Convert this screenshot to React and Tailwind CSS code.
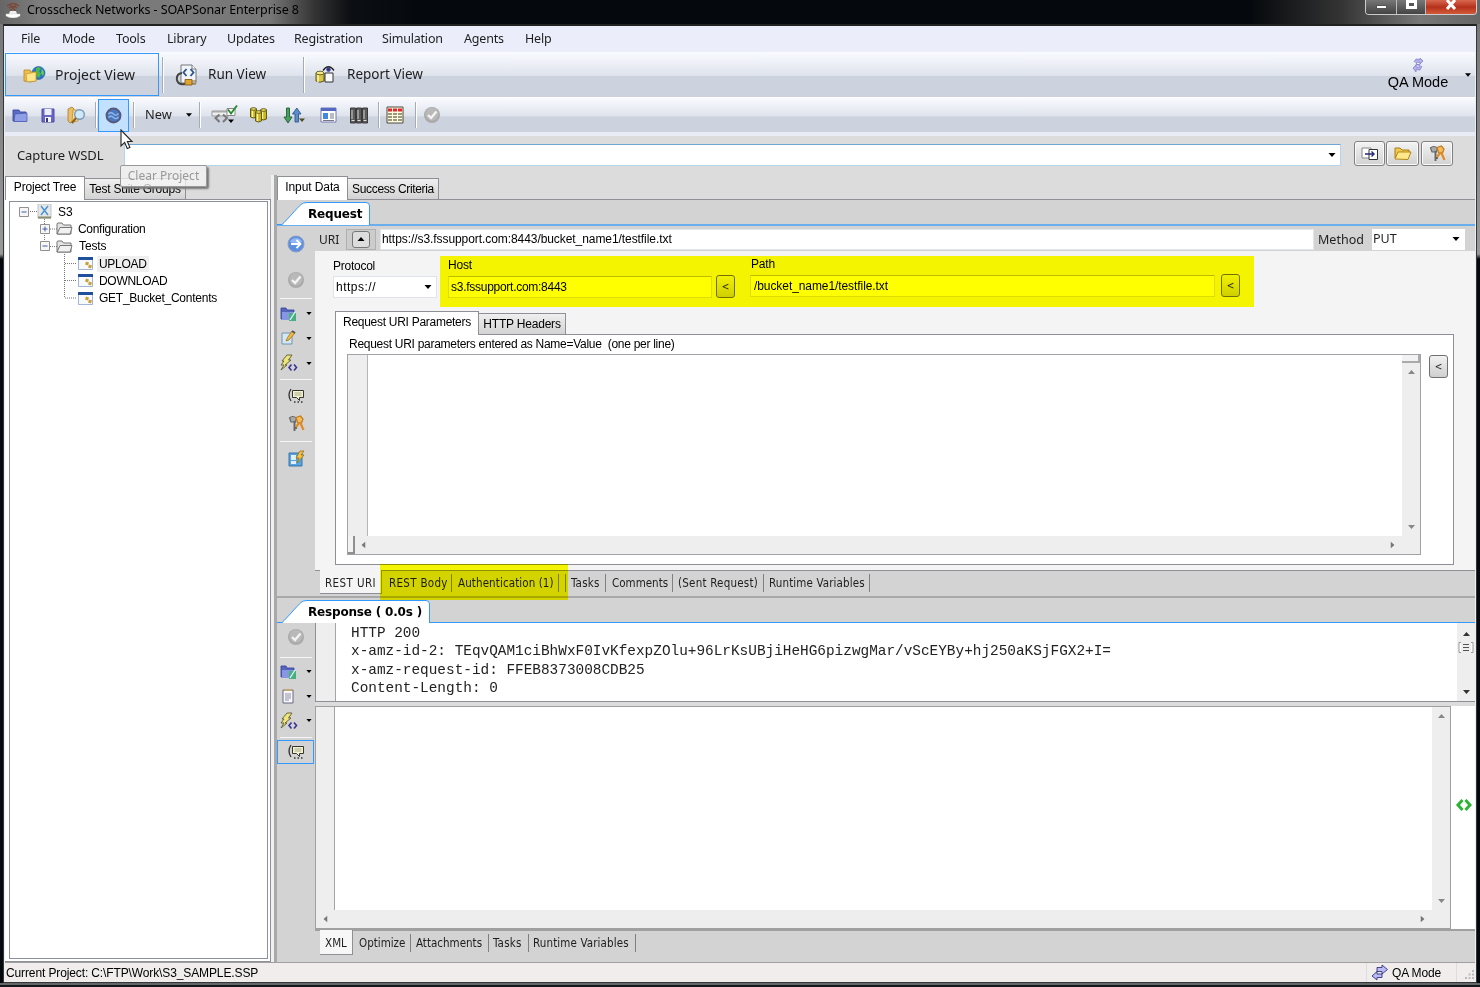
import React, { useState } from 'react';
import { clsx } from 'clsx';

const sans = "font-['Liberation_Sans',sans-serif] whitespace-pre text-black";
const noto = "font-['Noto_Sans',sans-serif] whitespace-pre text-[#1e1e1e]";
const verdana = "font-['DejaVu_Sans',sans-serif] whitespace-pre text-black";
const tahoma = "font-['DejaVu_Sans_Condensed','DejaVu_Sans',sans-serif] whitespace-pre text-[#1e1e1e]";

const menu = [
  ['File', 'w-[41px]'],
  ['Mode', 'w-[54px]'],
  ['Tools', 'w-[51px]'],
  ['Library', 'w-[60px]'],
  ['Updates', 'w-[67px]'],
  ['Registration', 'w-[88px]'],
  ['Simulation', 'w-[82px]'],
  ['Agents', 'w-[61px]'],
  ['Help', 'w-[40px]'],
];

const tests = [
  ['UPLOAD', 'tracking-[-0.3px]'],
  ['DOWNLOAD', 'tracking-[-0.3px]'],
  ['GET_Bucket_Contents', 'tracking-[-0.25px]'],
];

const responseLines = [
  'HTTP 200',
  'x-amz-id-2: TEqvQAM1ciBhWxF0IvKfexpZOlu+96LrKsUBjiHeHG6pizwgMar/vScEYBy+hj250aKSjFGX2+I=',
  'x-amz-request-id: FFEB8373008CDB25',
  'Content-Length: 0',
];

/* ---------- icons ---------- */

const Svg = ({ w = 18, h = 18, className, children }) => (
  <svg width={w} height={h} viewBox={`0 0 ${w} ${h}`} className={clsx('shrink-0', className)}>{children}</svg>
);

const Caret = ({ className, fill = '#000' }) => (
  <svg width="7" height="4" viewBox="0 0 7 4" className={clsx('shrink-0', className)}><path d="M0 0h7L3.5 4z" fill={fill} /></svg>
);

const AppIcon = () => (
  <Svg w={16} h={16}>
    <path d="M2 4q6-5 12 0M4 6q4-3 8 0M5 3l6 6M11 3L5 9" stroke="#7c4738" strokeWidth="1.3" fill="none" />
    <path d="M5 9h6l1 3H4z" fill="#eee" />
    <path d="M1 12h14v2q-7 4-14 0z" fill="#fff" stroke="#ccc" strokeWidth=".5" />
  </Svg>
);

const GlobeFolder = () => (
  <Svg w={24} h={20}>
    <circle cx="15.500" cy="8" r="6.500" fill="#2676c4" stroke="#1d5a9c" strokeWidth=".6" />
    <path d="M13 3q4-2 5 1l-2 2 2 3-2 4-3-3z" fill="#4fb848" />
    <path d="M19 4q3 3 1 7l-2-3z" fill="#6ccf53" />
    <path d="M1 5h6l1 2h5v9q-6 2-12 0z" fill="#eebf4f" stroke="#b48721" strokeWidth=".8" />
    <path d="M3 9l10-2v9l-9 1z" fill="#fde58c" stroke="#c4952b" strokeWidth=".7" />
  </Svg>
);

const RunIcon = () => (
  <Svg w={24} h={24}>
    <path d="M6 2h11l4 4v14H6z" fill="#f1f4f8" stroke="#777" />
    <path d="M17 2v4h4" fill="#fff" stroke="#777" />
    <path d="M11.500 6L8.500 9.500l3 3.500M15.500 6l3 3.500-3 3.500" stroke="#27548e" strokeWidth="1.800" fill="none" />
    <path d="M7 10q-6 1-5 7 1 5 8 4" stroke="#444" strokeWidth="2" fill="none" />
    <path d="M10 16.500h7v5.500h-7z" fill="#e0a531" stroke="#7a5411" strokeWidth=".8" />
    <path d="M17 18h4M17 21h4" stroke="#8a641c" strokeWidth="1.200" />
  </Svg>
);

const ReportIcon = () => (
  <Svg w={22} h={22}>
    <path d="M2 9v8q4 2.500 8 0V9z" fill="#d6c64a" stroke="#4d4a10" strokeWidth=".9" />
    <path d="M4 9v9" stroke="#fbf3a4" strokeWidth="1.600" />
    <ellipse cx="6" cy="9" rx="4" ry="1.800" fill="#f3e989" stroke="#4d4a10" strokeWidth=".8" />
    <path d="M11 9h8v9h-8z" fill="#fafafa" stroke="#333" />
    <path d="M9 6.500q5.500-7.500 11 0" stroke="#222" strokeWidth="1.300" fill="none" />
    <circle cx="14.500" cy="5.500" r="2.200" fill="#37398a" />
  </Svg>
);

const BlueFolder = () => (
  <Svg w={17} h={15}>
    <path d="M1 2h6l1 2h6v9H1z" fill="#5a6cc4" stroke="#3b4a9c" strokeWidth=".9" />
    <path d="M3 6l12-1v8.500H2z" fill="#8e9ee6" stroke="#4556aa" strokeWidth=".7" />
  </Svg>
);

const SaveIcon = () => (
  <Svg w={14} h={15}>
    <path d="M1 1h12v13H1z" fill="#6868c4" stroke="#4d4da8" />
    <path d="M3.500 1h7v6h-7z" fill="#eceef8" />
    <path d="M4 9h6v5H4z" fill="#f4f4fb" />
    <path d="M5 10h2v4H5z" fill="#39397c" />
  </Svg>
);

const SearchFolder = () => (
  <Svg w={19} h={18}>
    <path d="M1 3l4-2 2 2v12l-4 2-2-2z" fill="#e9bf6a" stroke="#a87a22" strokeWidth=".8" />
    <path d="M6 4h5v11l-6 1z" fill="#f6dd98" stroke="#b68a34" strokeWidth=".7" />
    <circle cx="12.500" cy="8.500" r="4.800" fill="#cfe8fa" stroke="#7f99b3" strokeWidth="1.400" />
    <path d="M9 12l-4 5" stroke="#8b6224" strokeWidth="2.200" />
  </Svg>
);

const ClearIcon = () => (
  <Svg w={17} h={17}>
    <circle cx="8.500" cy="8.500" r="7" fill="#4a78c0" stroke="#58597a" strokeWidth="1.900" />
    <path d="M3.500 7q2.500-2.500 5 0t5-.5M3.500 10.500q2.500-2.500 5 0t5-.5" stroke="#8fbae8" strokeWidth="1.300" fill="none" />
  </Svg>
);

const XmlCheck = () => (
  <Svg w={28} h={20}>
    <path d="M1 6h17v5H1z" fill="#eee" stroke="#999" />
    <path d="M1 6h15v1.500H1z" fill="#aaa" />
    <path d="M8.500 9.500l-4 3.500 4 4M12 9.500l4 3.500-4 4" stroke="#777" strokeWidth="2" fill="none" />
    <path d="M16 3.500h8v7h-8z" fill="#fff" stroke="#888" />
    <path d="M17 4.500l3 4 6-8" stroke="#25892d" strokeWidth="1.800" fill="none" />
    <path d="M17 14.500h6l-3 3.500z" fill="#000" />
  </Svg>
);

const Barrels = () => (
  <Svg w={18} h={16}>
    {[[0.5, 1, 8], [10.5, 2, 9], [5.5, 4, 9]].map(([x, y, h], i) => (
      <g key={i} stroke="#55500c" strokeWidth=".9">
        <path d={`M${x} ${y + 1}v${h}q3 2 6 0v-${h}z`} fill="#c9b629" />
        <path d={`M${x + 2} ${y + 2}v${h - 1}`} stroke="#fbf39b" strokeWidth="1.400" />
        <ellipse cx={x + 3} cy={y + 1} rx="3" ry="1.300" fill="#efe36a" />
      </g>
    ))}
  </Svg>
);

const UpDown = () => (
  <Svg w={22} h={17}>
    <path d="M3.500 1h3v9h2.500l-4 6-4-6h2.500z" fill="#46a05b" stroke="#20603a" strokeWidth=".9" />
    <path d="M12 15h3.500V7H18l-4.200-6L9.500 7H12z" fill="#5c8dc9" stroke="#2f588f" strokeWidth=".9" />
    <path d="M16 11.500h6l-3 3.500z" fill="#4f4a1c" />
  </Svg>
);

const FormIcon = () => (
  <Svg w={17} h={16}>
    <path d="M1 1h15v14H1z" fill="#fff" stroke="#7779b5" />
    <path d="M1 1h15v3H1z" fill="#5568c4" />
    <path d="M3 6h5v6H3z" fill="#3f8ae0" />
    <path d="M10 7h4M10 9h4M10 11h4M3 13.500h11" stroke="#778" />
  </Svg>
);

const Servers = () => (
  <Svg w={18} h={17}>
    {[0.5, 6.5, 12.5].map((x) => (
      <g key={x}>
        <path d={`M${x} 1h5v15h-5z`} fill="#5c5c5c" stroke="#3a3a3a" />
        <path d={`M${x + 1.5} 3v9`} stroke="#b9b9b9" strokeWidth="1.300" />
        <path d={`M${x + 1} 13.500h3`} stroke="#ddd" />
      </g>
    ))}
  </Svg>
);

const TableIcon = () => (
  <Svg w={18} h={18}>
    <path d="M1 1h16v16H1z" fill="#fffbe6" stroke="#4d4a3c" />
    <path d="M2 4h14" stroke="#e32626" strokeWidth="3" strokeDasharray="4 1" />
    <path d="M2 8h14M2 11h14M2 14h14" stroke="#7b7850" strokeWidth="1.500" strokeDasharray="4 1" />
  </Svg>
);

const CheckCircle = () => (
  <Svg>
    <circle cx="9" cy="9" r="8" fill="#aaa" />
    <circle cx="9" cy="8" r="6.500" fill="#b9b9b9" />
    <path d="M5 9l3 3 5.500-6.500" stroke="#f3f3f3" strokeWidth="2.400" fill="none" />
  </Svg>
);

const GoArrow = () => (
  <Svg>
    <circle cx="9" cy="9" r="8" fill="#5d8fe0" stroke="#8b9cc0" />
    <path d="M3 7a6.500 6.500 0 0 1 12 0q-6 2-12 0z" fill="#91b6f2" />
    <path d="M4 9h9M9.500 5l4 4-4 4" stroke="#fff" strokeWidth="1.800" fill="none" />
  </Svg>
);

const FolderEdit = () => (
  <Svg w={17} h={16}>
    <path d="M1 2h5l1 2h7v9H1z" fill="#5465bd" stroke="#3b4a9c" strokeWidth=".9" />
    <path d="M2 6h12l-1 8H2z" fill="#8796e0" />
    <path d="M9 7h7v8H9z" fill="#49ae83" />
    <path d="M10 14l5-8" stroke="#d8f4e7" strokeWidth="1.400" />
  </Svg>
);

const NoteEdit = () => (
  <Svg w={16} h={16}>
    <path d="M2 3h10v11H2z" fill="#d3e8f4" stroke="#7295ad" />
    <path d="M6 11l1.500-3.500L12 1l3 2-6 7z" fill="#efb843" stroke="#9a6d18" strokeWidth=".7" />
    <path d="M12 1l3 2" stroke="#555" strokeWidth="2" />
  </Svg>
);

const BoltCode = () => (
  <Svg w={18} h={18}>
    <path d="M7 1h5L8.500 6H11L5 11h2L1 16l3-5H1l3-4H2z" fill="#eee67a" stroke="#5c5b32" strokeWidth=".9" />
    <path d="M11.500 10.500L9 13.500l2.500 3M14 10.500l2.500 3-2.500 3" stroke="#3a3494" strokeWidth="1.600" fill="none" />
  </Svg>
);

const Comment = () => (
  <Svg w={18} h={16}>
    <path d="M4 1q-4 6 0 12" stroke="#333" strokeWidth="1.300" fill="none" />
    <path d="M5.500 2.500h11v7h-4v3l-3-3h-4z" fill="#f3f3cf" stroke="#333" />
    <path d="M7.500 5h7M7.500 7h7" stroke="#a9a98c" />
    <path d="M7 14h9" stroke="#333" strokeWidth="1.300" strokeDasharray="1.500 2" />
  </Svg>
);

const Keys = () => (
  <Svg w={17} h={17}>
    <path d="M1.500 3q3-3 7 0l-1 4H3z" fill="#aaa" stroke="#666" strokeWidth="1.200" />
    <path d="M6.500 6v10M6.500 13H9" stroke="#666" strokeWidth="1.900" />
    <path d="M8 2.500l4.500-1.500 2.500 3-1.500 4-4-.5z" fill="#f4bd59" stroke="#c07a1f" strokeWidth="1.200" />
    <path d="M12 7l3.500 8M11 8l-3 4" stroke="#e08a22" strokeWidth="2.200" />
  </Svg>
);

const BoltBox = () => (
  <Svg w={17} h={17}>
    <path d="M1 3h13v13H1z" fill="#5ba3dc" stroke="#3674ae" />
    <path d="M3 5h5v5H3zM3 11h5v3H3z" fill="#dff0fb" />
    <path d="M12 1h4l-3 4h3l-7 8 2-5H8z" fill="#f6c340" stroke="#97701a" strokeWidth=".8" />
  </Svg>
);

const Doc = () => (
  <Svg w={15} h={16}>
    <path d="M3 2h10v13H3z" fill="#f7f7fb" stroke="#686880" />
    <path d="M4 1h8v2H4z" fill="#c0a777" />
    <path d="M5 6h6M5 8h6M5 10h6M5 12h4" stroke="#8d8da5" />
  </Svg>
);

const SwapDoc = () => (
  <Svg w={18} h={14}>
    <path d="M1 1h9v10H1z" fill="#fff" stroke="#888" />
    <path d="M8 2.500h8.500v10H8z" fill="#fff" stroke="#333" />
    <path d="M4 7h9M10.500 4.500L13 7l-2.500 2.500" stroke="#26267c" strokeWidth="1.400" fill="none" />
  </Svg>
);

const YellowFolder = () => (
  <Svg w={18} h={15}>
    <path d="M1 12V2h5l2 2h7v3" fill="#eec94f" stroke="#ab7d12" />
    <path d="M1 13L4 6h13l-3 7.500z" fill="#ffe88a" stroke="#b3851a" />
  </Svg>
);

const QaIcon = () => (
  <Svg w={12} h={16}>
    <path d="M2 5l2-3 4 .5V1l3 3-3 3V5.500L5 5l-1 3h3" fill="#b3b1ee" stroke="#8582c8" strokeWidth=".8" />
    <path d="M10 9l-2 4-4-.5V15l-3-4 3-3v2l3 .500 1-3H5" fill="#b3b1ee" stroke="#8582c8" strokeWidth=".8" />
  </Svg>
);

const SyncArrows = () => (
  <Svg w={18} h={17}>
    <path d="M6 3.500h5V1l5.500 4.500L11 10V7.500H6z" fill="#b9bbf5" stroke="#34347c" strokeWidth=".9" />
    <path d="M11 10H6V7.500L1 12l5 4v-2.500h5z" fill="#b9bbf5" stroke="#34347c" strokeWidth=".9" />
  </Svg>
);

const GreyFolder = () => (
  <Svg w={17} h={13}>
    <path d="M1 12V2q0-1 1-1h4l1.500 2H15v9z" fill="#e4e4e4" stroke="#777" />
    <path d="M1 12L4 5.500h12L14 12z" fill="#f1f1f1" stroke="#777" />
  </Svg>
);

const TestIcon = () => (
  <Svg w={15} h={13}>
    <path d="M.5.5h14v12H.5z" fill="#f7faff" stroke="#8aa3cd" strokeWidth=".8" />
    <path d="M0 0h15v3H0z" fill="#204f9e" />
    <path d="M8 4.500l3 1-1 3-3-1zM11 7.500l3 1-1 3-3-1z" fill="#c9a13a" />
  </Svg>
);

const Expander = ({ open }) => (
  <Svg w={10} h={10}>
    <path d="M.5.5h9v9h-9z" fill="#f6f6f6" stroke="#909090" />
    <path d={open ? 'M2.500 5h5' : 'M2.500 5h5M5 2.500v5'} stroke="#3c5ca8" />
  </Svg>
);

/* ---------- small controls ---------- */

const ToolSep = ({ className }) => <div className={clsx('w-[2px] border-l border-[#a5aab8] bg-white', className)} />;

const LessButton = ({ className }) => (
  <button className={clsx('flex h-[23px] w-[19px] shrink-0 items-center justify-center rounded-[3px] border border-[#707070] bg-gradient-to-b from-[#f2f2f2] to-[#cfcfcf]', className)}>
    <span className={clsx(tahoma, 'text-[10px] leading-none')}>&lt;</span>
  </button>
);

const IconButton = ({ className, children }) => (
  <button className={clsx('flex h-[25px] items-center justify-center rounded-[3px] border border-[#808080] bg-gradient-to-b from-[#f3f3f3] to-[#d2d2d2] shadow-[inset_0_0_0_1px_#fafafa]', className)}>
    {children}
  </button>
);

const SideRow = ({ className, children, menu: hasMenu }) => (
  <div className={clsx('flex items-center', hasMenu ? 'justify-between pr-[3px] pl-[3px]' : 'justify-center', className)}>
    {children}
    {hasMenu && <Caret className="h-[3px] w-[6px]" />}
  </div>
);

const SideSep = ({ className }) => <div className={clsx('mx-[3px] h-px shrink-0 bg-[#f6f6f6]', className)} />;

const SlantTab = ({ w, children }) => (
  <div className="relative h-full">
    <svg width={w} height="23" viewBox={`0 0 ${w} 23`} className="absolute bottom-[-1px] left-0">
      <path d={`M5 23C10 18 20 6 24 2.500Q26 .5 30 .5H${w - 4}Q${w - 0.5} .5 ${w - 0.5} 4V23z`} fill="#fff" />
      <path d={`M0 22.500H5C10 18 20 6 24 2.500Q26 .5 30 .5H${w - 4}Q${w - 0.5} .5 ${w - 0.5} 4V23`} fill="none" stroke="#3399ff" />
    </svg>
    <span className={clsx(verdana, 'relative block pt-[6px] pl-[31px] text-[12px] leading-[16px] font-bold tracking-[-0.18px]')}>{children}</span>
  </div>
);

function TitleBar() {
  return (
    <div className="flex h-[24px] shrink-0 items-start justify-between bg-[linear-gradient(90deg,#666_0,#7d7d7d_40px,#777_270px,#333_315px,#0c0f13_350px,#05080c_420px,#05080c_1250px,#333_1340px,#777_1420px,#666_1480px)]">
      <div className="flex items-center pt-[1px] pl-[5px]">
        <AppIcon />
        <span className={clsx(noto, 'ml-[6px] text-[12.5px] leading-[17px] tracking-[-0.1px] !text-black')}>Crosscheck Networks - SOAPSonar Enterprise 8</span>
      </div>
      <div className="mr-[3px] flex h-[15px] w-[112px] overflow-hidden rounded-b-[4px] border border-t-0 border-[#ccc]">
        <div className="flex w-[31px] items-center justify-center border-r border-[#bbb] bg-gradient-to-b from-[#777] to-[#444]">
          <div className="mt-[-1px] h-[4px] w-[11px] border border-[#555] bg-white" />
        </div>
        <div className="flex w-[29px] items-start justify-center border-r border-[#bbb] bg-gradient-to-b from-[#777] to-[#444]">
          <div className="h-[9px] w-[11px] border-[3px] border-white bg-[#555]" />
        </div>
        <div className="flex flex-1 items-start justify-center bg-gradient-to-b from-[#d9674f] via-[#b5301a] to-[#d35a3a]">
          <svg width="12" height="10" viewBox="0 0 12 10"><path d="M2 0l8 9M10 0L2 9" stroke="#fff" strokeWidth="3" /></svg>
        </div>
      </div>
    </div>
  );
}

function ViewBar() {
  return (
    <div className="flex h-[45px] shrink-0 items-stretch bg-[linear-gradient(180deg,#f9fbff_0%,#dfe3ec_52%,#cdd2df_54%,#cdd2df_100%)]">
      <div className="mt-[1px] flex h-[43px] w-[154px] items-center border border-[#3399ff] pl-[17px]">
        <GlobeFolder />
        <span className={clsx(noto, 'ml-[8px] text-[14px]')}>Project View</span>
      </div>
      <div className="mt-[5px] ml-[3px] h-[36px] w-[2px] border-l border-[#a5aab8] bg-white" />
      <div className="flex w-[139px] items-center pl-[11px]">
        <RunIcon />
        <span className={clsx(noto, 'ml-[9px] text-[13.500px]')}>Run View</span>
      </div>
      <div className="mt-[5px] h-[36px] w-[2px] border-l border-[#a5aab8] bg-white" />
      <div className="flex flex-1 items-center pl-[9px]">
        <ReportIcon />
        <span className={clsx(noto, 'ml-[11px] text-[13.5px]')}>Report View</span>
      </div>
      <div className="flex w-[68px] flex-col items-center pt-[5px]">
        <QaIcon />
        <span className={clsx(sans, 'text-[14.500px] leading-[18px]')}>QA Mode</span>
      </div>
      <Caret className="mt-[21px] mr-[4px] ml-[13px] h-[4px] w-[6px]" />
    </div>
  );
}

function ToolBar() {
  return (
    <div className="flex h-[35px] shrink-0 items-center border-t border-white bg-[linear-gradient(180deg,#f9fbff_0%,#dfe3ec_52%,#cdd2df_56%,#cdd2df_100%)]">
      <div className="ml-[7px]"><BlueFolder /></div>
      <div className="ml-[12px]"><SaveIcon /></div>
      <div className="ml-[12px]"><SearchFolder /></div>
      <ToolSep className="ml-[9px] h-[26px]" />
      <div className="ml-[1px] flex h-[33px] w-[31px] items-center justify-center border border-[#3399ff] bg-[#c2e0ff]"><ClearIcon /></div>
      <ToolSep className="ml-[4px] h-[26px]" />
      <span className={clsx(noto, 'ml-[10px] w-[41px] text-[12.800px]')}>New</span>
      <Caret className="h-[4px] w-[6px]" />
      <ToolSep className="ml-[7px] h-[26px]" />
      <div className="ml-[10px]"><XmlCheck /></div>
      <div className="ml-[11px]"><Barrels /></div>
      <div className="ml-[15px]"><UpDown /></div>
      <div className="ml-[15px]"><FormIcon /></div>
      <div className="ml-[13px]"><Servers /></div>
      <ToolSep className="ml-[10px] h-[26px]" />
      <div className="ml-[6px]"><TableIcon /></div>
      <ToolSep className="ml-[11px] h-[26px]" />
      <div className="ml-[6px]"><CheckCircle /></div>
    </div>
  );
}

function CaptureBar() {
  return (
    <div className="flex h-[38px] shrink-0 items-start bg-[#dcdcdc]">
      <span className={clsx(noto, 'mt-[10px] ml-[12px] w-[107px] text-[13px] leading-[18px] tracking-[-0.1px]')}>Capture WSDL</span>
      <div className="mt-[8px] flex h-[22px] w-[1217px] items-center justify-end border border-[#b5d4ea] border-t-[#6fa7d3] bg-white pr-[4px]">
        <Caret className="w-[8px]" />
      </div>
      <IconButton className="mt-[5px] ml-[13px] w-[31px]"><SwapDoc /></IconButton>
      <IconButton className="mt-[5px] ml-[1px] w-[33px]"><YellowFolder /></IconButton>
      <IconButton className="mt-[5px] ml-[2px] w-[32px]"><Keys /></IconButton>
    </div>
  );
}

// pair of property-page tabs, first one raised
function PageTabs({ tabs, active, onChange }) {
  return (
    <div className="flex h-[25px] shrink-0 items-end">
      {tabs.map(([label, width, cls], i) => (
        <div
          key={label}
          onClick={() => onChange(i)}
          className={clsx(
            'flex justify-center border border-[#8f9096]',
            width,
            i === active ? 'h-[24px] border-b-0 bg-white pt-[3px]' : 'h-[22px] border-l-0 bg-gradient-to-b from-[#efefef] to-[#d3d3d3] pt-[3px]'
          )}
        >
          <span className={clsx(sans, 'text-[12px] leading-[15px]', cls)}>{label}</span>
        </div>
      ))}
      <div className="h-px flex-1 bg-[#8f9096]" />
    </div>
  );
}

function ProjectTree() {
  const [tab, setTab] = useState(0);
  return (
    <div className="flex w-[266px] shrink-0 flex-col pt-px">
      <PageTabs
        active={tab}
        onChange={setTab}
        tabs={[['Project Tree', 'w-[80px]', 'tracking-[-0.2px]'], ['Test Suite Groups', 'w-[101px]', 'tracking-[-0.23px]']]}
      />
      <div className="flex flex-1 flex-col border-r border-b border-[#8f9096] bg-white pt-px pr-[2px] pb-[2px] pl-[4px]">
        <div className="relative flex-1 border border-[#8c909c] pt-[1px]">
          <svg width="90" height="110" className="absolute top-0 left-0">
            <path d="M18 9.500h10M34.500 15v30M38 27h10M38 44.500h10M54.500 52v44M55 61.500h12M55 78.500h12M55 96h12" stroke="#777" strokeDasharray="1 1" fill="none" />
          </svg>
          <div className="relative flex h-[17.3px] items-center pl-[9px]">
            <Expander open />
            <Svg w={15} h={15} className="ml-[8px]">
              <path d="M1 0h13v14H1z" fill="#e6e6e6" stroke="#c4c4c4" />
              <path d="M1 13.500h13" stroke="#8c8c70" strokeWidth="2" />
              <path d="M4 2l7 9M11 2l-7 9" stroke="#4a94d8" strokeWidth="1.500" />
            </Svg>
            <span className={clsx(sans, 'ml-[6px] text-[12px]')}>S3</span>
          </div>
          <div className="relative flex h-[17.3px] items-center pl-[30px]">
            <Expander />
            <div className="ml-[6px]"><GreyFolder /></div>
            <span className={clsx(sans, 'ml-[5px] text-[12px] tracking-[-0.3px]')}>Configuration</span>
          </div>
          <div className="relative flex h-[17.3px] items-center pl-[30px]">
            <Expander open />
            <div className="ml-[6px]"><GreyFolder /></div>
            <span className={clsx(sans, 'ml-[6px] text-[12px] tracking-[-0.1px]')}>Tests</span>
          </div>
          {tests.map(([name, cls], i) => (
            <div key={name} className="relative flex h-[17.3px] items-center pl-[68px]">
              <TestIcon />
              <span className={clsx(sans, 'ml-[4px] px-[2px] text-[12px] leading-[16px]', cls, i === 0 && 'bg-[#efefef]')}>{name}</span>
            </div>
          ))}
        </div>
      </div>
    </div>
  );
}

function RequestSide() {
  return (
    <div className="flex w-[38px] shrink-0 flex-col bg-[#d3d3d3]">
      <SideRow className="h-[36px]"><GoArrow /></SideRow>
      <SideRow className="h-[35px]"><CheckCircle /></SideRow>
      <SideSep className="mt-[1px]" />
      <SideRow menu className="mt-[2px] h-[25px]"><FolderEdit /></SideRow>
      <SideRow menu className="h-[24px]"><NoteEdit /></SideRow>
      <SideRow menu className="h-[26px]"><BoltCode /></SideRow>
      <SideSep className="mt-[3px]" />
      <SideRow className="mt-[2px] h-[27px]"><Comment /></SideRow>
      <SideRow className="h-[28px]"><Keys /></SideRow>
      <SideSep className="mt-[4px]" />
      <SideRow className="mt-[2px] h-[29px]"><BoltBox /></SideRow>
    </div>
  );
}

function ParamEditor() {
  return (
    <div className="flex h-[201px] w-[1074px] flex-col border border-[#a2a2a8] bg-white">
      <div className="flex flex-1">
        <div className="w-[20px] border-r border-[#b5b5b5] bg-[#eee]" />
        <div className="flex-1" />
        <div className="flex w-[18px] flex-col items-center justify-between bg-[#eee] pb-[7px]">
          <div className="h-[8px] w-full border-r-2 border-b-2 border-[#aaa] bg-[#f2f2f2]" />
          <Caret fill="#888" className="mt-[7px] mb-auto rotate-180" />
          <Caret fill="#888" />
        </div>
      </div>
      <div className="flex h-[18px] items-center bg-[#eee]">
        <div className="h-[18px] w-[7px] border-r-2 border-b-2 border-[#8f8f8f] bg-[#f2f2f2]" />
        <Caret fill="#777" className="ml-[5px] rotate-90" />
        <Caret fill="#777" className="mr-[24px] ml-auto -rotate-90" />
      </div>
    </div>
  );
}

const bottomTabs = [
  ['REST Body', 'w-[70px] pl-[7px]', 'tracking-[0.3px]'],
  ['Authentication (1)', 'w-[107px] pl-[6px]', 'tracking-[0.1px]'],
  ['', 'w-[7px]', ''],
  ['Tasks', 'w-[40px] pl-[5px]', 'tracking-[0.2px]'],
  ['Comments', 'w-[67px] pl-[6px]', ''],
  ['(Sent Request)', 'w-[91px] pl-[5px]', 'tracking-[0.22px]'],
  ['Runtime Variables', 'w-[106px] pl-[5px]', 'tracking-[0.12px]'],
];

const resultTabs = [
  ['Optimize', 'w-[58px] pl-[6px]', ''],
  ['Attachments', 'w-[78px] pl-[5px]', ''],
  ['Tasks', 'w-[40px] pl-[4px]', 'tracking-[0.2px]'],
  ['Runtime Variables', 'w-[107px] pl-[4px]', 'tracking-[0.12px]'],
];

function RequestPane() {
  const [tab, setTab] = useState(0);
  return (
    <div className="flex h-[370px] shrink-0">
      <RequestSide />
      <div className="flex min-w-0 flex-1 flex-col">
        <div className="flex h-[25px] shrink-0 items-center bg-[#d3d3d3] pt-px">
          <span className={clsx(noto, 'ml-[4px] w-[27px] pt-px text-[12px] leading-[16px]')}>URI</span>
          <div className="flex h-[21px] w-[30px] items-center justify-center border border-[#b0b0b0] bg-[#ccc]">
            <div className="flex h-[17px] w-[18px] items-center justify-center rounded-[3px] border border-[#777] bg-[#ddd]">
              <Caret className="w-[10px] rotate-180" />
            </div>
          </div>
          <div className="ml-[4px] h-[21px] w-[934px] border border-[#e2e6ee] bg-white pl-[1px]">
            <span className={clsx(sans, 'block text-[12px] leading-[18px] tracking-[-0.07px]')}>https://s3.fssupport.com:8443/bucket_name1/testfile.txt</span>
          </div>
          <span className={clsx(noto, 'ml-[4px] w-[54px] pt-px text-[12.500px] leading-[16px]')}>Method</span>
          <div className="flex h-[21px] w-[93px] items-center justify-between bg-white pr-[5px] pl-[1px]">
            <span className={clsx(noto, 'text-[12.500px] leading-[18px]')}>PUT</span>
            <Caret className="w-[8px]" />
          </div>
        </div>
        <div className="flex h-[319px] shrink-0 flex-col bg-[#f4f4f4] pl-[18px]">
          <div className="flex h-[59px] items-start">
            <div className="mt-[7px] flex w-[105px] flex-col">
              <span className={clsx(sans, 'text-[12px] leading-[16px] tracking-[-0.25px]')}>Protocol</span>
              <div className="mt-[2px] flex h-[22px] w-[104px] items-center justify-between border border-[#e0e3ea] bg-white pr-[4px] pl-[2px]">
                <span className={clsx(sans, 'text-[12px] tracking-[0.5px]')}>https://</span>
                <Caret className="w-[8px]" />
              </div>
            </div>
            <div className="mt-[6px] ml-[10px] flex w-[264px] flex-col">
              <span className={clsx(sans, 'text-[12px] leading-[16px] tracking-[-0.2px]')}>Host</span>
              <div className="mt-[3px] h-[22px] border border-[#dedede] border-t-[#bdbdbd] bg-white pl-[2px]">
                <span className={clsx(sans, 'block text-[12px] leading-[20px] tracking-[-0.27px]')}>s3.fssupport.com:8443</span>
              </div>
            </div>
            <LessButton className="mt-[24px] ml-[4px]" />
            <div className="mt-[5px] ml-[15px] flex w-[465px] flex-col">
              <span className={clsx(sans, 'pl-px text-[12px] leading-[16px] tracking-[-0.2px]')}>Path</span>
              <div className="mt-[3px] h-[22px] border border-[#dedede] border-t-[#bdbdbd] bg-white pl-[3px]">
                <span className={clsx(sans, 'block text-[12px] leading-[20px] tracking-[-0.08px]')}>/bucket_name1/testfile.txt</span>
              </div>
            </div>
            <LessButton className="mt-[23px] ml-[6px]" />
          </div>
          <div className="ml-[2px] w-[1119px] shrink-0">
            <PageTabs
              active={tab}
              onChange={setTab}
              tabs={[['Request URI Parameters', 'w-[144px]', 'tracking-[-0.28px]'], ['HTTP Headers', 'w-[87px]', 'tracking-[-0.2px]']]}
            />
            <div className="flex h-[230px] flex-col border border-t-0 border-[#8f9096] bg-white pl-[11px]">
              <span className={clsx(sans, 'h-[19px] pl-[2px] text-[12px] leading-[18px] tracking-[-0.28px]')}>Request URI parameters entered as Name=Value  (one per line)</span>
              <div className="flex">
                <ParamEditor />
                <LessButton className="mt-[1px] ml-[8px]" />
              </div>
            </div>
          </div>
        </div>
        <div className="flex h-[26px] shrink-0 items-start border-t border-[#8f9096] bg-[#d3d3d3] pl-[5px]">
          <div className="mt-[-1px] flex h-[24px] w-[62px] justify-center border-r border-b border-[#8f9096] bg-[#f4f4f4] pt-[5px]">
            <span className={clsx(tahoma, 'text-[11.500px] leading-[16px] tracking-[0.4px]')}>REST URI</span>
          </div>
          {bottomTabs.map(([label, width, cls], i) => (
            <div key={i} className={clsx('mt-[3px] h-[18px] border-r border-[#808080]', width)}>
              <span className={clsx(tahoma, 'block text-[11.500px] leading-[18px]', cls)}>{label}</span>
            </div>
          ))}
        </div>
      </div>
    </div>
  );
}

function ResponsePane() {
  return (
    <div className="flex min-h-0 flex-1">
      <div className="flex w-[38px] shrink-0 flex-col bg-[#d3d3d3]">
        <SideRow className="h-[28px]"><CheckCircle /></SideRow>
        <SideSep className="mt-[6px]" />
        <SideRow menu className="mt-[1px] h-[25px]"><FolderEdit /></SideRow>
        <SideRow menu className="h-[24px]"><Doc /></SideRow>
        <SideRow menu className="h-[25px]"><BoltCode /></SideRow>
        <SideSep className="mt-[4px]" />
        <div className="mt-[2px] flex h-[24px] w-[37px] items-center justify-center border border-[#3399ff]"><Comment /></div>
      </div>
      <div className="flex min-w-0 flex-1 flex-col">
        <div className="flex h-[79px] shrink-0 border-b border-l border-[#8f9096] bg-white">
          <div className="w-[20px] shrink-0 border-r border-[#a5a5a5] bg-[#eee]" />
          <div className="flex-1 pt-[1px] pl-[15px]">
            {responseLines.map((line) => (
              <div key={line} className="h-[18.4px] font-['Liberation_Mono',monospace] text-[14.4px] leading-[18.4px] whitespace-pre text-[#222]">{line}</div>
            ))}
          </div>
          <div className="flex w-[18px] flex-col items-center bg-[#eee] pt-[9px] pb-[7px]">
            <Caret fill="#333" className="rotate-180" />
            <svg width="16" height="11" viewBox="0 0 16 11" className="mt-[6px]">
              <path d="M3 .5H1v10h2M13 .5h2v10h-2" stroke="#999" fill="#fff" />
              <path d="M5 2.500h6M5 5.500h6M5 8.500h6" stroke="#555" />
            </svg>
            <Caret fill="#333" className="mt-auto" />
          </div>
        </div>
        <div className="h-[4px] shrink-0 bg-[#dcdcdc]" />
        <div className="flex h-[223px] shrink-0">
          <div className="flex w-[1136px] shrink-0 flex-col border border-[#a0a0a0] bg-white">
            <div className="flex flex-1">
              <div className="w-[19px] border-r border-[#a5a5a5] bg-[#eee]" />
              <div className="flex-1" />
              <div className="flex w-[18px] flex-col items-center justify-between bg-[#eee] py-[7px]">
                <Caret fill="#888" className="rotate-180" />
                <Caret fill="#888" />
              </div>
            </div>
            <div className="flex h-[18px] items-center justify-between bg-[#eee] pr-[24px] pl-[6px]">
              <Caret fill="#777" className="rotate-90" />
              <Caret fill="#777" className="-rotate-90" />
            </div>
          </div>
          <div className="flex flex-1 items-center justify-center bg-white pb-[26px]">
            <svg width="17" height="12" viewBox="0 0 17 12"><path d="M7.500 1L3 6l4.500 5M10.500 1L15 6l-4.500 5" stroke="#2fb336" strokeWidth="3" fill="none" /></svg>
          </div>
        </div>
        <div className="flex flex-1 items-start border-t-2 border-[#a0a0a0] bg-[#d3d3d3] pl-[5px]">
          <div className="mt-[-1px] flex h-[25px] w-[33px] justify-center border-r border-b border-[#8f9096] bg-[#f7f7f7] pt-[5px]">
            <span className={clsx(tahoma, 'text-[11.500px] leading-[16px]')}>XML</span>
          </div>
          {resultTabs.map(([label, width, cls]) => (
            <div key={label} className={clsx('mt-[3px] h-[18px] border-r border-[#808080]', width)}>
              <span className={clsx(tahoma, 'block text-[11.500px] leading-[18px]', cls)}>{label}</span>
            </div>
          ))}
        </div>
      </div>
    </div>
  );
}

function App() {
  const [tab, setTab] = useState(0);

  return (
    <div className="relative flex h-[987px] w-[1480px] flex-col overflow-hidden bg-[#15181c]">
      <TitleBar />
      <div className="flex h-[959px] w-[1480px] shrink-0 bg-[linear-gradient(180deg,#777_0px,#999_230px,#05080c_235px,#05080c_100%)]">
        <div className="ml-[3px] flex w-[1474px] flex-col border border-t-[2px] border-[#33373b] border-t-[#222]">
          <div className="flex flex-1 flex-col border-x border-[#eee]">
            <div className="flex h-[26px] shrink-0 items-center bg-[#ebeefa] pl-[16px]">
              {menu.map(([label, width]) => (
                <span key={label} className={clsx(noto, 'text-[12.5px] leading-[16px] tracking-[-0.2px]', width)}>{label}</span>
              ))}
            </div>
            <ViewBar />
            <ToolBar />
            <div className="h-[4px] shrink-0 bg-[#e9ecf7]" />
            <CaptureBar />
            <div className="flex h-[788px] shrink-0 bg-[#dcdcdc]">
              <ProjectTree />
              <div className="mt-[1px] w-[6px] shrink-0 border-r-[3px] border-l-[3px] border-r-[#a9a9a9] border-l-[#f0f0f0]" />
              <div className="flex min-w-0 flex-1 flex-col pt-px">
                <PageTabs
                  active={tab}
                  onChange={setTab}
                  tabs={[['Input Data', 'w-[71px]', 'tracking-[-0.1px]'], ['Success Criteria', 'w-[91px]', 'tracking-[-0.35px]']]}
                />
                <div className="h-[26px] shrink-0 border-b-2 border-[#6aaeee] bg-[#d3d3d3]">
                  <SlantTab w={93}>Request</SlantTab>
                </div>
                <RequestPane />
                <div className="h-[2px] shrink-0 bg-[#a8a8a8]" />
                <div className="h-[25px] shrink-0 border-b border-[#3399ff] bg-[#d3d3d3]">
                  <SlantTab w={153}>Response ( 0.0s )</SlantTab>
                </div>
                <ResponsePane />
              </div>
            </div>
            <div className="flex flex-1 items-center border-t border-[#a0a0a0] bg-[#f0edec]">
              <span className={clsx(sans, 'flex-1 pt-px pl-[1px] text-[12px] tracking-[-0.12px]')}>Current Project: C:\FTP\Work\S3_SAMPLE.SSP</span>
              <div className="flex w-[91px] items-center border-x border-[#ddd] pl-[4px]">
                <SyncArrows />
                <span className={clsx(sans, 'ml-[3px] pt-px text-[12px] tracking-[-0.15px]')}>QA Mode</span>
              </div>
              <svg width="18" height="16" viewBox="0 0 18 16"><path d="M8 13h2M11.500 13h2M15 13h2M11.500 9.500h2M15 9.500h2M15 6h2" stroke="#bbb" strokeWidth="2" /></svg>
            </div>
          </div>
        </div>
      </div>
      <div className="h-[2px] bg-[#666]" />

      {/* marker highlights */}
      <div className="absolute top-[256px] left-[440px] h-[51px] w-[814px] bg-[#ff0] mix-blend-multiply" />
      <div className="absolute top-[564px] left-[380px] h-[36px] w-[188px] bg-[#ff0] mix-blend-multiply" />

      {/* hover tooltip and pointer */}
      <div className="absolute top-[165px] left-[120px] flex h-[22px] w-[87px] justify-center rounded-[2px] border border-[#999] bg-[#f4f4f6]/75 shadow-[2px_2px_2px_#777]">
        <span className={clsx(noto, 'text-[12px] leading-[19px] !text-[#999]')}>Clear Project</span>
      </div>
      <svg width="14" height="22" viewBox="0 0 14 22" className="absolute top-[129px] left-[120px]">
        <path d="M1 1v16l3.700-3.600 2.500 6.100 2.700-1.100-2.500-5.900H12z" fill="#fff" stroke="#222" strokeWidth="1.100" />
      </svg>
    </div>
  );
}

export default App;
